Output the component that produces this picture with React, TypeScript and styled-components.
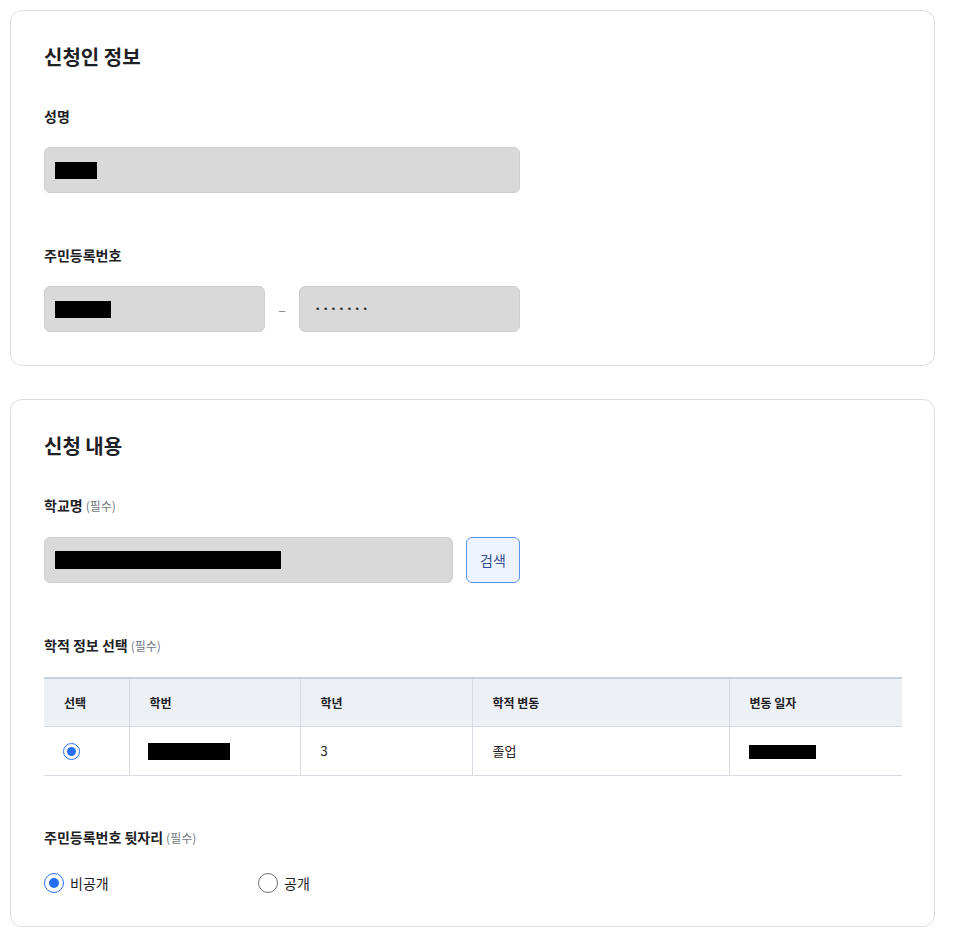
import React from "react";
import styled, { createGlobalStyle } from "styled-components";

const Global = createGlobalStyle`
  html, body { margin: 0; padding: 0; background: #ffffff; }
  body { font-family: "Noto Sans CJK KR", "Noto Sans", sans-serif; color: #1e2124; }
  * { box-sizing: border-box; }
`;

const Page = styled.div`
  padding: 10px 31px 10px 10px;
  display: flex;
  flex-direction: column;
  gap: 33px;
`;

const Card = styled.section`
  border: 1px solid #dcdcdc;
  border-radius: 12px;
  padding: 31px 32px 33px 33px;
  display: flex;
  flex-direction: column;
`;

const Title = styled.h2`
  margin: 0;
  font-size: 20px;
  font-weight: 700;
  line-height: 30px;
  color: #1e2124;
`;

const Label = styled.div<{ $top: number }>`
  margin-top: ${(p) => p.$top}px;
  font-size: 14px;
  font-weight: 700;
  line-height: 22px;
  color: #1e2124;
`;

const Req = styled.span`
  font-weight: 400;
  font-size: 12px;
  color: #6d7882;
  margin-left: 3px;
`;

const Row = styled.div`
  margin-top: 20px;
  display: flex;
  align-items: center;
`;

const Field = styled.div<{ $w: number }>`
  width: ${(p) => p.$w}px;
  height: 46px;
  background: #d9d9d9;
  border: 1px solid #cfcfcf;
  border-radius: 6px;
  display: flex;
  align-items: center;
  padding-left: 10px;
`;

const Redact = styled.span<{ $w: number; $h?: number; $shift?: number }>`
  display: inline-block;
  vertical-align: middle;
  width: ${(p) => p.$w}px;
  height: ${(p) => p.$h ?? 17}px;
  margin-left: ${(p) => p.$shift ?? 0}px;
  background: #000;
`;

const Dash = styled.span`
  width: 34px;
  text-align: center;
  color: #888;
  font-size: 14px;
`;

const Dots = styled.span`
  font-size: 9px;
  letter-spacing: 2.6px;
  color: #333;
  padding-left: 5px;
  font-family: "DejaVu Sans", sans-serif;
`;

const SearchBtn = styled.button`
  margin-left: 13px;
  width: 54px;
  height: 46px;
  border: 1px solid #5b8ff0;
  background: #eef4ff;
  border-radius: 6px;
  color: #2f4f8f;
  font-family: inherit;
  font-size: 14px;
  padding: 0;
`;

const Table = styled.table`
  margin-top: 20px;
  width: 858px;
  border-collapse: collapse;
  border-top: 2px solid #c4d1e0;
  font-size: 13px;
`;

const Th = styled.th<{ $w: number }>`
  width: ${(p) => p.$w}px;
  height: 48px;
  background: #edf0f5;
  text-align: left;
  padding: 0 0 0 20px;
  font-weight: 700;
  font-size: 12px;
  color: #1e2124;
  border-bottom: 1px solid #d8dce2;
  & + & { border-left: 1px solid #d8dce2; }
`;

const Td = styled.td`
  height: 49px;
  padding: 0 0 0 20px;
  font-size: 13px;
  color: #1e2124;
  border-bottom: 1px solid #d8dce2;
  vertical-align: middle;
  & + & { border-left: 1px solid #d8dce2; }
`;

const Radio = styled.span<{ $on?: boolean; $size: number }>`
  display: inline-flex;
  vertical-align: middle;
  align-items: center;
  justify-content: center;
  width: ${(p) => p.$size}px;
  height: ${(p) => p.$size}px;
  border-radius: 50%;
  border: 1.5px solid ${(p) => (p.$on ? "#256ef4" : "#6f6f6f")};
  background: #fff;
  flex: none;
  &::after {
    content: "";
    display: ${(p) => (p.$on ? "block" : "none")};
    width: ${(p) => Math.round(p.$size * 0.5)}px;
    height: ${(p) => Math.round(p.$size * 0.5)}px;
    border-radius: 50%;
    background: #256ef4;
  }
`;

const RadioCell = styled(Td)`
  padding-left: 19px;
`;

const RadioGroup = styled.div`
  margin-top: 24px;
  display: flex;
  align-items: center;
`;

const RadioItem = styled.label<{ $w?: number }>`
  display: flex;
  align-items: center;
  gap: 6px;
  width: ${(p) => (p.$w ? `${p.$w}px` : "auto")};
  font-size: 14px;
  color: #1e2124;
`;

export default function App() {
  return (
    <>
      <Global />
      <Page>
        <Card>
          <Title>신청인 정보</Title>
          <Label $top={33}>성명</Label>
          <Row>
            <Field $w={476}>
              <Redact $w={42} />
            </Field>
          </Row>
          <Label $top={51}>주민등록번호</Label>
          <Row>
            <Field $w={221}>
              <Redact $w={56} />
            </Field>
            <Dash>–</Dash>
            <Field $w={221}>
              <Dots>•••••••</Dots>
            </Field>
          </Row>
        </Card>

        <Card>
          <Title>신청 내용</Title>
          <Label $top={33}>
            학교명<Req>(필수)</Req>
          </Label>
          <Row>
            <Field $w={409}>
              <Redact $w={226} $h={18} />
            </Field>
            <SearchBtn>검색</SearchBtn>
          </Row>
          <Label $top={51}>
            학적 정보 선택<Req>(필수)</Req>
          </Label>
          <Table>
            <thead>
              <tr>
                <Th $w={85}>선택</Th>
                <Th $w={171}>학번</Th>
                <Th $w={172}>학년</Th>
                <Th $w={257}>학적 변동</Th>
                <Th $w={173}>변동 일자</Th>
              </tr>
            </thead>
            <tbody>
              <tr>
                <RadioCell>
                  <Radio $on $size={17} />
                </RadioCell>
                <Td>
                  <Redact $w={82} $shift={-2} />
                </Td>
                <Td>3</Td>
                <Td>졸업</Td>
                <Td>
                  <Redact $w={67} $h={14} $shift={-1} />
                </Td>
              </tr>
            </tbody>
          </Table>
          <Label $top={50}>
            주민등록번호 뒷자리<Req>(필수)</Req>
          </Label>
          <RadioGroup>
            <RadioItem $w={214}>
              <Radio $on $size={20} />
              비공개
            </RadioItem>
            <RadioItem>
              <Radio $size={20} />
              공개
            </RadioItem>
          </RadioGroup>
        </Card>
      </Page>
    </>
  );
}
